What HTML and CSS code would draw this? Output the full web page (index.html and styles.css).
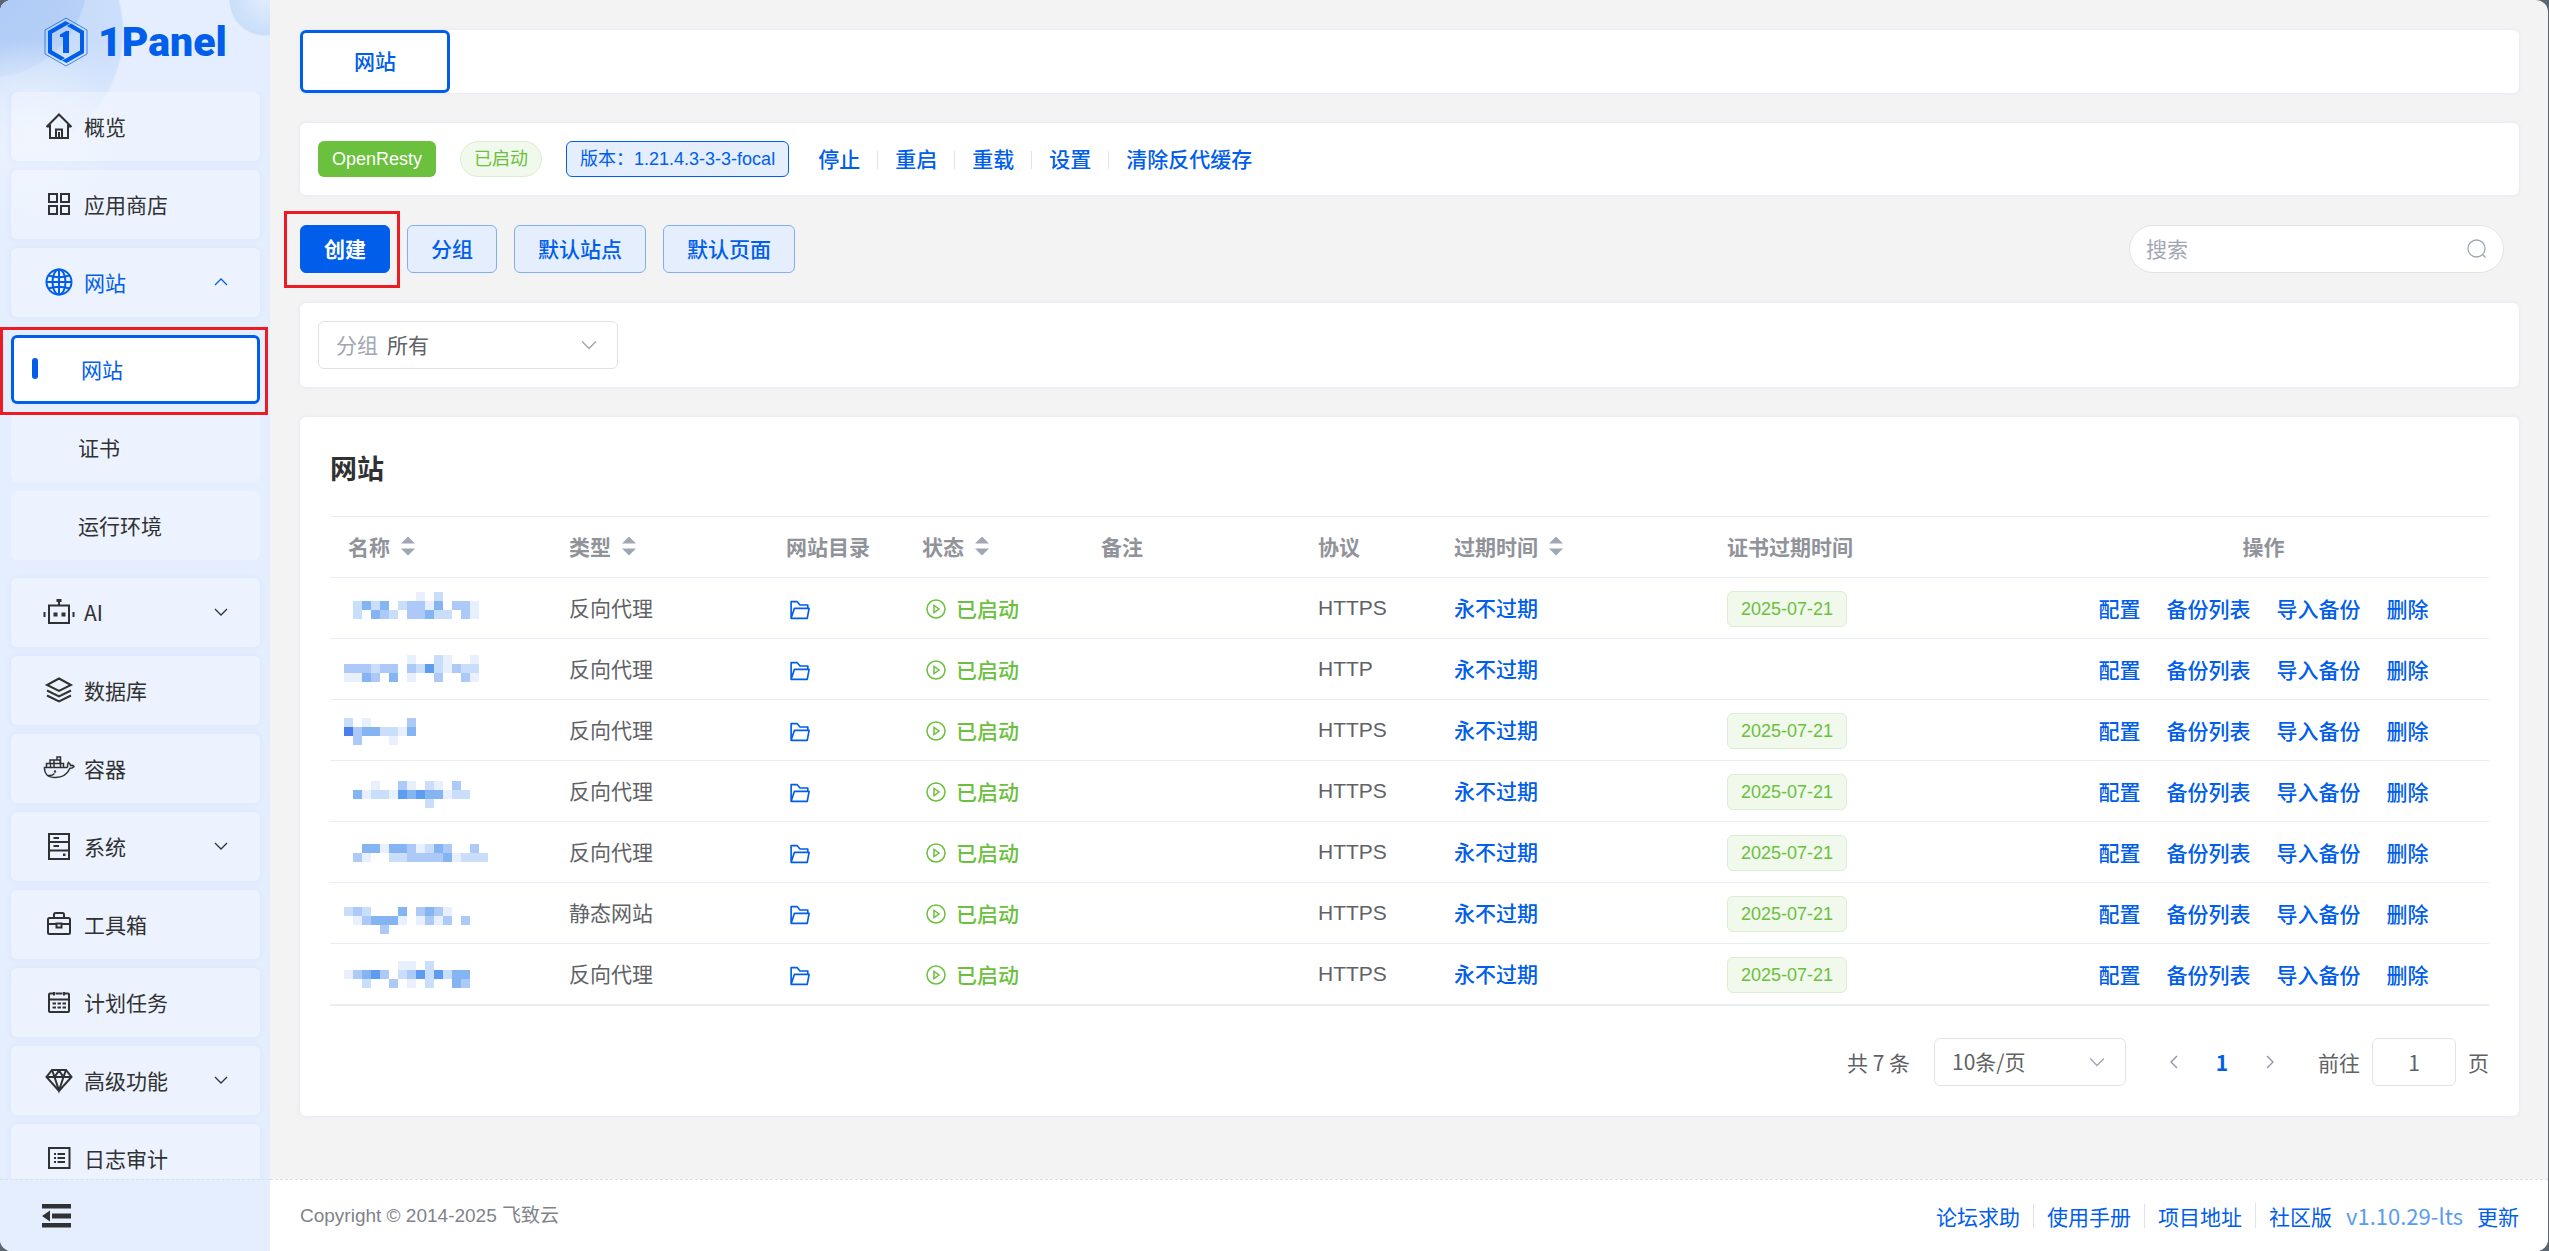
FILE: index.html
```html
<!DOCTYPE html>
<html lang="zh-CN">
<head>
<meta charset="utf-8">
<title>1Panel</title>
<link rel="stylesheet" href="styles.css">
</head>
<body>
<svg class="sprite" aria-hidden="true">
  <symbol id="down" viewBox="0 0 14 14"><path d="M1 4l6 6 6-6" fill="none" stroke="currentColor"/></symbol>
  <symbol id="folder" viewBox="0 0 18 18"><path d="M1 16.500V1.500H6.500L9 4.500H16V7.500M1 16.500L4 7.500H17.200L15.500 16.500Z" fill="none" stroke="currentColor" stroke-width="1.500" stroke-linejoin="round"/></symbol>
  <symbol id="play" viewBox="0 0 20 20"><path d="M10 1a9 9 0 1 0 0 18 9 9 0 0 0 0-18zM8 6.500v7l5-3.500z" fill="none" stroke="currentColor" stroke-width="1.500"/></symbol>
</svg>
<div class="app">
  <aside class="sidebar">
    <a class="logo" href="#">
      <svg width="44" height="50" viewBox="0 0 44 50" fill="none" stroke="#005eeb">
        <path d="M22 1L43 13v24L22 49 1 37V13z" stroke-width="1" opacity=".7"/>
        <path d="M26 6.500L21.500 4 4 14v22l13 7.500 4-2.500L8 33.500v-17L23 8z" fill="#005eeb" stroke="none"/>
        <path d="M18 43.500L22.500 46 40 36V14L27 6.500 23 9l13 7.500v17L21 42z" fill="#005eeb" stroke="none"/>
        <path d="M16 17.500l6-3.500h3v22h-6V20h-3z" fill="#005eeb" stroke="none"/>
      </svg>
      <span>1Panel</span>
    </a>
    <nav class="menu">
      <a class="item" href="#"><svg class="ico" viewBox="0 0 28 28"><path d="M1.500 15L14 2.500 26.500 15M5 12.500V26h18V12.500M11 26v-8.500h6V26M14 20v6M2 14.500h3M23 14.500h3"/></svg>概览</a>
      <a class="item" href="#"><svg class="ico" viewBox="0 0 28 28"><path d="M4 4h8v8H4zM16 4h8v8h-8zM4 16h8v8H4zM16 16h8v8h-8z"/></svg>应用商店</a>
      <a class="item open" href="#"><svg class="ico" viewBox="0 0 28 28"><circle cx="14" cy="14" r="12.500"/><ellipse cx="14" cy="14" rx="6.500" ry="12.500"/><path d="M14 1.500v25M1.500 14h25M3.500 7.500q10.500 3.500 21 0M3.500 20.500q10.500-3.500 21 0"/></svg>网站<svg class="arrow up"><use href="#down"/></svg></a>
      <div class="submenu">
        <a class="item sub active" href="#">网站</a>
        <a class="item sub" href="#">证书</a>
        <a class="item sub" href="#">运行环境</a>
      </div>
      <a class="item" href="#"><svg class="ico" viewBox="0 0 28 28"><path d="M4 7.500h20V25H4zM14 7V2M-.5 14v5M28.500 14v5"/><path d="M11.500 1h5v3h-5zM8.500 14.500h4v4h-4zM16.500 14.500h4v4h-4z" fill="currentColor" stroke="none"/></svg>AI<svg class="arrow"><use href="#down"/></svg></a>
      <a class="item" href="#"><svg class="ico" viewBox="0 0 28 28"><path d="M14 2.500L26 9 14 15 2 9zM2 14.500L14 20.500l12-6M2 19.500L14 25.500l12-6"/></svg>数据库</a>
      <a class="item" href="#"><svg class="ico thin" viewBox="0 0 28 28"><path d="M-.5 13.500H22q1-1 .5-3l1-2q2 1.500 2 3 2.500-.5 3.500 1-1.500 2-4 1.800C22 21 17 23.500 10.500 23.500 3 23.500-1 20-.5 13.500zM1.500 13V9.500h17V13M5 9.500V6h10v3.500M12 6V3h3.500v10M5.500 13V9.500M9 13V6M3 21.500q4 .5 6.500-2"/><circle cx="10" cy="17.500" r=".5"/></svg>容器</a>
      <a class="item" href="#"><svg class="ico" viewBox="0 0 28 28"><path d="M4 2h20v25H4zM4 10h20M4 18.500h20M8.500 6H14M8.500 14H14" /><path d="M18 21.500h2.500V24H18z" fill="currentColor" stroke="none"/></svg>系统<svg class="arrow"><use href="#down"/></svg></a>
      <a class="item" href="#"><svg class="ico" viewBox="0 0 28 28"><path d="M4.500 8h19q1.500 0 1.500 1.500v13q0 1.500-1.500 1.500h-19Q3 24 3 22.500v-13Q3 8 4.500 8zM9 8V4.500Q9 3 10.500 3h7Q19 3 19 4.500V8M3 14h8.500M16.500 14H25M11.500 13.500h5v4h-5z"/></svg>工具箱</a>
      <a class="item" href="#"><svg class="ico" viewBox="0 0 28 28"><path d="M10.500 5.500h7M20 5.500h3q1 0 1 1V23q0 1-1 1H5q-1 0-1-1V6.500q0-1 1-1h3M9 4v3.500M19 4v3.500M4 11.500h20M7.500 15.500H11M12.500 15.500H16M17.500 15.500H21M7.500 19.500H11M12.500 19.500H16M17.500 19.500H21"/></svg>计划任务</a>
      <a class="item" href="#"><svg class="ico" viewBox="0 0 28 28"><path d="M7 4h14l5.500 7L14 25 1.500 11zM1.500 11h25M9.500 11L14 24.500 18.500 11M7 4l2.500 7L14 4.500l4.500 6.500L21 4"/></svg>高级功能<svg class="arrow"><use href="#down"/></svg></a>
      <a class="item" href="#"><svg class="ico" viewBox="0 0 28 28"><path d="M4 4h20.500v20H4zM12.500 10H20M12.500 14H20M12.500 18H20M9 10h2M9 14h2M9 18h2"/></svg>日志审计</a>
    </nav>
    <button class="collapse" aria-label="收起菜单"><svg width="30" height="24" viewBox="0 0 30 24" fill="currentColor"><path d="M0 0h29v4.500H0zM10 9.500h19v5H10zM0 19h29v4.500H0zM0 12l8-5.500v11z"/></svg></button>
  </aside>

  <div class="page">
    <main class="content">
      <div class="card tabs"><button class="tab">网站</button></div>

      <section class="card status">
        <span class="tag dark">OpenResty</span>
        <span class="tag round">已启动</span>
        <span class="tag blue">版本：1.21.4.3-3-3-focal</span>
        <div class="links">
          <button class="link">停止</button>
          <button class="link">重启</button>
          <button class="link">重载</button>
          <button class="link">设置</button>
          <button class="link">清除反代缓存</button>
        </div>
      </section>

      <div class="toolbar">
        <div class="marked"><button class="btn primary">创建</button></div>
        <button class="btn">分组</button>
        <button class="btn">默认站点</button>
        <button class="btn">默认页面</button>
        <label class="search">
          <input type="text" placeholder="搜索" aria-label="搜索">
          <svg width="20" height="20" viewBox="0 0 20 20" fill="none" stroke="currentColor" stroke-width="1.300"><circle cx="9.500" cy="9.500" r="8.500"/><path d="M15.500 15.500l3 3"/></svg>
        </label>
      </div>

      <div class="card filter">
        <div class="select">
          <label for="group">分组</label>
          <select id="group"><option>所有</option></select>
          <svg class="arrow"><use href="#down"/></svg>
        </div>
      </div>

      <section class="card list">
        <h1>网站</h1>
        <table>
          <colgroup><col class="c-name"><col class="c-type"><col class="c-dir"><col class="c-state"><col class="c-note"><col class="c-proto"><col class="c-expire"><col class="c-cert"><col class="c-ops"></colgroup>
          <thead>
            <tr><th><span class="sort">名称</span></th><th><span class="sort">类型</span></th><th>网站目录</th><th><span class="sort">状态</span></th><th>备注</th><th>协议</th><th><span class="sort">过期时间</span></th><th>证书过期时间</th><th>操作</th></tr>
          </thead>
          <tbody id="rows"></tbody>
        </table>
        <div class="pager">
          <span class="total">共 7 条</span>
          <div class="select size">
            <select aria-label="每页条数"><option>10条/页</option></select>
            <svg class="arrow"><use href="#down"/></svg>
          </div>
          <button class="step" aria-label="上一页"><svg class="arrow left"><use href="#down"/></svg></button>
          <button class="step current">1</button>
          <button class="step" aria-label="下一页"><svg class="arrow right"><use href="#down"/></svg></button>
          <label class="jump">前往<input type="text" value="1">页</label>
        </div>
      </section>
    </main>
    <footer class="footer">
      <span class="copy">Copyright © 2014-2025 飞致云</span>
      <div class="about">
        <a href="#">论坛求助</a>
        <a href="#">使用手册</a>
        <a href="#">项目地址</a>
        <span><a href="#">社区版</a><span class="version">v1.10.29-lts</span><a href="#">更新</a></span>
      </div>
    </footer>
  </div>
</div>
<script src="rows.js"></script>
</body>
</html>
```

FILE: styles.css
```css
:root {
  --primary: #005eeb;
  --text: #606266;
  --muted: #909399;
  --line: #e9ecf5;
  --border: #dfe3e9;
  --success: #6bc03d;
  --cjk: "Noto Sans CJK SC", sans-serif;
}

* { box-sizing: border-box; }

body {
  margin: 0;
  background: #5b6670;
  color: var(--text);
  font: 21px/32px var(--cjk);
}

a { color: inherit; text-decoration: none; }
button, input, select { font: inherit; color: inherit; }
button { padding: 0; border: 0; background: none; cursor: pointer; }
.sprite { display: none; }

.app {
  display: flex;
  min-height: 100vh;
  margin-right: 1px;
  border-radius: 12px;
  overflow: hidden;
  background: #f3f3f3;
}

/* sidebar */
.sidebar {
  display: flex;
  flex-direction: column;
  flex: none;
  width: 270px;
  height: 100vh;
  color: #303133;
  background:
    radial-gradient(circle at 265px 0, #e0ecfd 0, #c9def9 35px, transparent 36px),
    radial-gradient(circle at 30px 130px, rgba(237, 243, 254, .8), transparent 90px),
    linear-gradient(transparent 40px, #e5eefe 150px),
    radial-gradient(circle at -10px -20px, #adc9f5 0, #b6d0f7 96px, transparent 98px),
    radial-gradient(circle at 0 32px, #c3dafa 0, #cbdefb 122px, transparent 124px),
    #e5eefe;
  background-repeat: no-repeat;
}

.logo {
  display: flex;
  align-items: center;
  gap: 10px;
  height: 92px;
  padding: 0 0 8px 44px;
  color: var(--primary);
  font: 900 41px/48px Roboto, sans-serif;
}

.menu {
  display: flex;
  flex: 1;
  flex-direction: column;
  gap: 9px;
  min-height: 0;
  padding: 0 10px 0 11px;
  overflow: hidden;
}

.item {
  display: flex;
  flex: none;
  align-items: center;
  height: 69px;
  padding: 0 32px 2px 34px;
  border-radius: 6px;
  background: rgba(255, 255, 255, .3);
  box-shadow: 0 0 6px rgba(0, 94, 235, .07);
}

.item.open { color: var(--primary); }

.submenu {
  display: flex;
  flex: none;
  flex-direction: column;
  gap: 9px;
  margin: 9px 0;
}

.sub { padding-left: 67px; box-shadow: none; }

.sub.active {
  position: relative;
  border: 3px solid var(--primary);
  background: #fff;
  color: var(--primary);
}

.sub.active::before {
  content: "";
  position: absolute;
  left: 18px;
  width: 6px;
  height: 21px;
  border-radius: 3px;
  background: var(--primary);
}

.sub.active::after {
  content: "";
  position: absolute;
  inset: -11px -11px -14px -14px;
  border: 3px solid #ed1c24;
}

.ico {
  width: 28px;
  height: 28px;
  margin-right: 11px;
  overflow: visible;
  fill: none;
  stroke: currentColor;
  stroke-width: 2px;
}

.ico.thin { stroke-width: 1.5px; }

.arrow { flex: none; width: 14px; height: 14px; stroke-width: 1.3px; }
.item .arrow { margin-left: auto; }
.up { transform: rotate(180deg); }
.left { transform: rotate(90deg); }
.right { transform: rotate(-90deg); }

.collapse {
  display: flex;
  flex: none;
  align-items: center;
  height: 72px;
  padding-left: 42px;
  border-top: 1px dashed #dcdfe6;
}

/* page */
.page {
  display: flex;
  flex: 1;
  flex-direction: column;
  min-width: 0;
}

.content {
  display: flex;
  flex: 1;
  flex-direction: column;
  gap: 30px;
  padding: 30px 29px 30px 30px;
}

.card {
  border-radius: 6px;
  background: #fff;
  box-shadow: 0 0 4px rgba(0, 94, 235, .09);
}

.tabs { display: flex; }

.tab {
  width: 150px;
  height: 63px;
  padding-bottom: 3px;
  border: 3px solid var(--primary);
  border-radius: 6px;
  color: var(--primary);
  font-weight: 500;
}

.status {
  display: flex;
  align-items: center;
  height: 72px;
  padding: 0 18px;
}

.tag {
  display: inline-flex;
  align-items: center;
  height: 36px;
  padding: 0 13px;
  border: 1px solid #dbeed1;
  border-radius: 6px;
  background: #f0f9eb;
  color: var(--success);
  font: 18px/24px "Liberation Sans", var(--cjk);
}

.tag.dark {
  margin-right: 24px;
  padding: 0 14px;
  border: 0;
  background: var(--success);
  color: #fff;
}

.tag.round { margin-right: 24px; border-radius: 18px; }

.tag.blue {
  border-color: var(--primary);
  background: #e5eefd;
  color: var(--primary);
}

.links {
  display: flex;
  align-items: center;
  margin-left: 29px;
  padding-bottom: 3px;
}

.link { color: var(--primary); font-weight: 500; }

.links .link + .link::before {
  content: "";
  display: inline-block;
  width: 1px;
  height: 18px;
  margin: 0 17px;
  background: var(--border);
  vertical-align: -2px;
}

.toolbar { display: flex; gap: 17px; }

.btn {
  height: 48px;
  padding: 0 23px 2px;
  border: 1px solid #80aff5;
  border-radius: 6px;
  background: #e5eefd;
  color: var(--primary);
  font-weight: 500;
}

.btn.primary {
  border-color: var(--primary);
  background: var(--primary);
  color: #fff;
  font-weight: 700;
}

.marked { position: relative; }

.marked::after {
  content: "";
  position: absolute;
  inset: -14px -10px -15px -16px;
  border: 3px solid #ed1c24;
  pointer-events: none;
}

.search {
  display: flex;
  align-items: center;
  width: 375px;
  height: 48px;
  margin: 0 15px 0 auto;
  padding: 0 16px;
  border: 1px solid var(--border);
  border-radius: 24px;
  background: #fff;
  color: #a0a6b4;
}

.search input {
  flex: 1;
  min-width: 0;
  padding: 0 0 2px;
  border: 0;
  outline: 0;
  background: none;
}

.search input::placeholder { color: #a0a6b4; opacity: 1; }

.filter { padding: 18px; }

.select {
  display: flex;
  align-items: center;
  width: 300px;
  height: 48px;
  padding: 0 20px 0 17px;
  border: 1px solid var(--border);
  border-radius: 6px;
}

.select label { margin-right: 9px; padding-bottom: 2px; color: #a0a6b4; }
.select .arrow { width: 16px; height: 16px; color: #a0a6b4; }

.select select {
  flex: 1;
  min-width: 0;
  padding: 0 0 2px;
  border: 0;
  outline: 0;
  background: none;
  appearance: none;
}

.list { padding: 30px; }

h1 {
  margin: 0 0 27px;
  color: #303133;
  font: 700 27px/42px var(--cjk);
}

table {
  width: 100%;
  border-collapse: collapse;
  border-top: 1px solid var(--line);
  border-bottom: 2px solid var(--line);
  table-layout: fixed;
}

th, td {
  height: 61px;
  padding: 0 0 0 18px;
  border-bottom: 1px solid var(--line);
  text-align: left;
}

th { padding-bottom: 3px; color: var(--muted); font-weight: 700; }
th:last-child { padding-left: 0; text-align: center; }

.c-name { width: 221px; }
.c-type { width: 217px; }
.c-dir { width: 136px; }
.c-state { width: 179px; }
.c-note { width: 217px; }
.c-proto { width: 136px; }
.c-expire { width: 273px; }
.c-ops { width: 451px; }

.sort { display: inline-flex; align-items: center; gap: 11px; }

.sort::after {
  content: "";
  width: 14px;
  height: 20px;
  margin-top: 2px;
  background: #a0a6b4;
  clip-path: polygon(0 7px, 7px 0, 14px 7px, 0 7px, 0 12px, 14px 12px, 7px 19px, 0 12px);
}

td.name { padding-left: 14px; }
td.text { padding-bottom: 3px; }
.mosaic { display: block; width: 144px; height: 60px; }
.proto { font-family: "Liberation Sans", sans-serif; }
td .link { display: block; }
td .tag { vertical-align: middle; }

.folder { display: block; margin: 4px 0 0 4px; color: var(--primary); }

.state {
  display: flex;
  align-items: center;
  gap: 10px;
  padding-left: 4px;
  color: var(--success);
  font-weight: 500;
}

.state svg { margin-top: 2px; }

td.ops { padding: 0; }
.ops div { display: flex; justify-content: center; gap: 26px; }

.pager {
  display: flex;
  align-items: center;
  justify-content: flex-end;
  margin-top: 32px;
}

.size { width: 192px; margin: 0 24px; }
.step { display: grid; place-items: center; width: 48px; height: 48px; color: var(--muted); }
.step.current { color: var(--primary); font-weight: 700; }
.jump { display: flex; align-items: center; margin-left: 24px; }

.jump input {
  width: 84px;
  height: 48px;
  margin: 0 12px;
  padding: 0;
  border: 1px solid var(--border);
  border-radius: 6px;
  text-align: center;
}

.footer {
  display: flex;
  flex: none;
  align-items: center;
  justify-content: space-between;
  height: 72px;
  padding: 0 29px 0 30px;
  border-top: 1px dashed #dcdfe6;
  background: #fff;
}

.copy { color: #80838a; font: 19px/24px "Liberation Sans", var(--cjk); }

.about { display: flex; align-items: center; color: var(--primary); }

.about > * + * {
  padding-left: 13px;
  margin-left: 13px;
  border-left: 1px solid var(--border);
  line-height: 24px;
}

.version { margin: 0 14px; color: #5a9cf0; font-size: 22px; }
```

FILE: rows.js
```js
// Masked site names: digits are shades of 9px blocks, `top` is their distance from the row's top.
const shades = ['', '#e8f0fd', '#c9defb', '#adc9f7', '#84b4f2', '#5e9cf1', '#4a7ee8'];

const sites = [
  { top: 14, mask: ['000000001020000', '024240233140331', '020432033422031'], type: '反向代理', proto: 'HTTPS', cert: '2025-07-21' },
  { top: 16, mask: ['000000010021001', '333233032521322', '114304010030031'], type: '反向代理', proto: 'HTTP', cert: '' },
  { top: 18, mask: ['20100003', '63442214', '03000100'], type: '反向代理', proto: 'HTTPS', cert: '2025-07-21' },
  { top: 20, mask: ['00010031021030', '04122154544122', '00000000020000'], type: '反向代理', proto: 'HTTPS', cert: '2025-07-21' },
  { top: 22, mask: ['0044144312430030', '0310022333341222'], type: '反向代理', proto: 'HTTPS', cert: '2025-07-21' },
  { top: 24, mask: ['23200040343100', '01344410131303', '00003'], type: '静态网站', proto: 'HTTPS', cert: '2025-07-21' },
  { top: 17, mask: ['00000011020000', '13453023525244', '00200301020043'], type: '反向代理', proto: 'HTTPS', cert: '2025-07-21' },
];

const mosaic = ({ top, mask }) => mask.map((line, y) => [...line].map((level, x) =>
  level === '0' ? '' : `<rect x="${x * 9}" y="${top + y * 9}" width="9" height="9" fill="${shades[level]}"/>`).join('')).join('');

document.getElementById('rows').innerHTML = sites.map(site => `
  <tr>
    <td class="name"><svg class="mosaic" shape-rendering="crispEdges">${mosaic(site)}</svg></td>
    <td class="text">${site.type}</td>
    <td><svg class="folder" width="20" height="20"><use href="#folder"/></svg></td>
    <td><span class="state"><svg width="20" height="20"><use href="#play"/></svg>已启动</span></td>
    <td></td>
    <td class="proto">${site.proto}</td>
    <td class="text"><button class="link">永不过期</button></td>
    <td>${site.cert ? `<span class="tag">${site.cert}</span>` : ''}</td>
    <td class="ops"><div><button class="link">配置</button><button class="link">备份列表</button><button class="link">导入备份</button><button class="link">删除</button></div></td>
  </tr>`).join('');
```
